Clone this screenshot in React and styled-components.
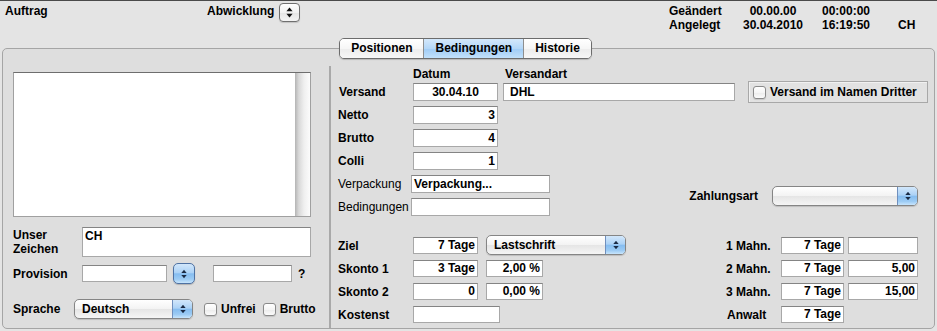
import React from 'react';
import styled, { createGlobalStyle, css } from 'styled-components';

const Global = createGlobalStyle`
  html, body { margin: 0; padding: 0; background: #e4e4e4; }
  body { font-family: "Liberation Sans", Arial, sans-serif; font-size: 12px; color: #000; }
  * { box-sizing: border-box; }
`;

const place = css`
  ${(p) => (p.$col ? `grid-column: ${p.$col};` : '')}
  ${(p) => (p.$row ? `grid-row: ${p.$row};` : '')}
`;

const Window = styled.div`
  width: 937px;
  height: 331px;
  display: flex;
  flex-direction: column;
  border-top: 1px solid #4a4a4a;
  background: #e4e4e4;
  overflow: hidden;
`;

const Header = styled.header`
  height: 37px;
  flex-shrink: 0;
  display: flex;
  align-items: flex-start;
  padding-left: 5px;
  font-weight: bold;
`;

const HeaderTitle = styled.div`
  width: 202px;
  margin-top: 3px;
  line-height: 14px;
`;

const HeaderGroup = styled.div`
  display: flex;
  align-items: flex-start;
  gap: 5px;
  margin-top: 2px;
`;

const HeaderLabel = styled.span`
  margin-top: 1px;
  line-height: 14px;
`;

const GrayStepper = styled.div`
  width: 21px;
  height: 19px;
  border: 1px solid #6f6f6f;
  border-radius: 4px;
  background: linear-gradient(#ffffff, #f1f1f1 50%, #e4e4e4 51%, #f4f4f4);
  box-shadow: 0 1px 1px rgba(0, 0, 0, 0.15);
  display: flex;
  align-items: center;
  justify-content: center;
`;

const InfoGrid = styled.div`
  margin-left: auto;
  margin-top: 3px;
  display: grid;
  grid-template-columns: 66px 76px 70px 56px;
  line-height: 14px;
`;

const InfoCell = styled.div`
  text-align: ${(p) => (p.$center ? 'center' : 'left')};
  padding-left: ${(p) => p.$pl || 0}px;
`;

const TabStrip = styled.div`
  position: relative;
  z-index: 1;
  height: 21px;
  flex-shrink: 0;
  display: flex;
  justify-content: center;
  padding-right: 6px;
  margin-bottom: -11px;
`;

const Segmented = styled.div`
  display: flex;
  height: 21px;
  border: 1px solid #6c6c6c;
  border-radius: 5px;
  overflow: hidden;
  box-shadow: 0 1px 1px rgba(0, 0, 0, 0.18);
`;

const Segment = styled.div`
  padding: 0 11px;
  line-height: 19px;
  font-weight: bold;
  background: ${(p) =>
    p.$active
      ? 'linear-gradient(#d4e8fb, #b4d7f8 50%, #9fcbf5 51%, #c2e1fb)'
      : 'linear-gradient(#ffffff, #f6f6f6 50%, #ececec 51%, #f7f7f7)'};
  & + & {
    border-left: 1px solid #8e8e8e;
  }
`;

const Panel = styled.main`
  flex: 1;
  min-height: 0;
  margin: 0 2px 2px;
  display: flex;
  border: 1px solid #a5a5a5;
  border-radius: 5px;
  background: #dedede;
`;

const LeftColumn = styled.section`
  width: 326px;
  flex-shrink: 0;
  padding: 23px 0 0 10px;
  display: flex;
  flex-direction: column;
`;

const ListBox = styled.div`
  width: 298px;
  height: 145px;
  display: flex;
  background: #fff;
  border: 1px solid #a0a0a0;
  border-top-color: #6e6e6e;
`;

const ListBody = styled.div`
  flex: 1;
`;

const ScrollTrack = styled.div`
  width: 15px;
  background: linear-gradient(to right, #b4b4b4, #d8d8d8 25%, #efefef 60%, #fcfcfc);
`;

const FormRow = styled.div`
  display: flex;
  align-items: ${(p) => p.$align || 'center'};
  margin-top: ${(p) => p.$mt || 0}px;
`;

const SideLabel = styled.div`
  width: ${(p) => p.$w}px;
  flex-shrink: 0;
  font-weight: bold;
  line-height: 14px;
  padding-top: ${(p) => p.$pt || 0}px;
`;

const TextField = styled.div`
  ${place}
  width: ${(p) => p.$w}px;
  height: ${(p) => p.$h || 18}px;
  margin-left: ${(p) => p.$ml || 0}px;
  align-self: start;
  justify-self: start;
  flex-shrink: 0;
  background: #fff;
  border: 1px solid #a8a8a8;
  border-top-color: #848484;
  font-weight: bold;
  line-height: ${(p) => (p.$h || 18) - 2}px;
  text-align: ${(p) => p.$align || 'left'};
  padding: 0 ${(p) => (p.$pad === undefined ? 2 : p.$pad)}px;
  white-space: nowrap;
  overflow: hidden;
`;

const MultiField = styled.div`
  width: ${(p) => p.$w}px;
  height: ${(p) => p.$h}px;
  background: #fff;
  border: 1px solid #a8a8a8;
  border-top-color: #848484;
  font-weight: bold;
  line-height: 14px;
  padding: 1px 2px;
`;

const aqua = 'linear-gradient(#d2e7fb 0%, #acd2f6 45%, #86bdf0 52%, #9ccbf4 80%, #c8e5fc 100%)';

const StepperButton = styled.div`
  width: 22px;
  height: 21px;
  margin: -2px 0 -2px ${(p) => p.$ml || 0}px;
  flex-shrink: 0;
  border: 1px solid #4f72a3;
  border-radius: 5px;
  background: ${aqua};
  box-shadow: 0 1px 1px rgba(0, 0, 0, 0.2);
  display: flex;
  align-items: center;
  justify-content: center;
`;

const Question = styled.span`
  margin-left: ${(p) => p.$ml || 0}px;
  font-weight: bold;
`;

const PopupButton = styled.div`
  ${place}
  width: ${(p) => p.$w}px;
  height: 20px;
  margin-top: ${(p) => p.$mt || 0}px;
  align-self: start;
  flex-shrink: 0;
  display: flex;
  border: 1px solid #858585;
  border-radius: 5px;
  overflow: hidden;
  background: linear-gradient(#ffffff, #f3f3f3 50%, #e5e5e5 51%, #f5f5f5);
  box-shadow: 0 1px 1px rgba(0, 0, 0, 0.15);
`;

const PopupText = styled.div`
  flex: 1;
  padding-left: 7px;
  line-height: 18px;
  font-weight: bold;
  white-space: nowrap;
`;

const PopupCap = styled.div`
  width: 20px;
  border-left: 1px solid #6f8fbd;
  background: ${aqua};
  display: flex;
  align-items: center;
  justify-content: center;
`;

const CheckBox = styled.div`
  width: 13px;
  height: 13px;
  flex-shrink: 0;
  margin-left: ${(p) => p.$ml || 0}px;
  border: 1px solid #8a8a8a;
  border-radius: 3px;
  background: linear-gradient(#ffffff, #f5f5f5 50%, #ebebeb 51%, #fbfbfb);
  box-shadow: 0 1px 1px rgba(0, 0, 0, 0.12);
`;

const CheckText = styled.span`
  margin-left: 4px;
  font-weight: bold;
  white-space: nowrap;
`;

const RightPart = styled.section`
  flex: 1;
  margin-top: 17px;
  border-left: 2px solid #a9a9a9;
  padding-left: 7px;
  display: flex;
  flex-direction: column;
`;

const TopGrid = styled.div`
  display: grid;
  grid-template-columns: 73px 92px 232px 13px 180px;
  grid-template-rows: 17px repeat(6, 23px);
`;

const BottomGrid = styled.div`
  margin-top: 16px;
  display: grid;
  grid-template-columns: 75px 73px 140px 100px 55px 67px 70px;
  grid-template-rows: repeat(3, 23px) 18px;
`;

const ColHead = styled.div`
  ${place}
  margin-top: 1px;
  padding-left: 2px;
  line-height: 14px;
  font-weight: bold;
`;

const GridLabel = styled.div`
  ${place}
  height: ${(p) => p.$h || 18}px;
  display: flex;
  align-items: center;
  padding-left: ${(p) => p.$pl || 0}px;
  font-weight: ${(p) => (p.$plain ? 'normal' : 'bold')};
  white-space: nowrap;
`;

const GroupBox = styled.div`
  ${place}
  height: 22px;
  margin-top: -2px;
  display: flex;
  align-items: center;
  padding-left: 4px;
  border: 1px solid #a8a8a8;
  background: rgba(255, 255, 255, 0.12);
  box-shadow: inset 1px 1px 0 rgba(255, 255, 255, 0.5);
`;

const PayRow = styled.div`
  ${place}
  justify-self: end;
  align-self: start;
  margin: 11px 10px 0 0;
  display: flex;
  align-items: center;
  gap: 14px;
  font-weight: bold;
`;

const Arrows = ({ w = 7, h = 11, color = '#111' }) => (
  <svg width={w} height={h} viewBox="0 0 7 11" aria-hidden="true">
    <path d="M3.5 0.6 L6.6 4.2 L0.4 4.2 Z" fill={color} />
    <path d="M0.4 6.8 L6.6 6.8 L3.5 10.4 Z" fill={color} />
  </svg>
);

const Popup = ({ w, text, col, row, mt }) => (
  <PopupButton $w={w} $col={col} $row={row} $mt={mt}>
    <PopupText>{text}</PopupText>
    <PopupCap>
      <Arrows w={6} h={10} color="#1a2a44" />
    </PopupCap>
  </PopupButton>
);

const topNumbers = [
  { label: 'Netto', value: '3', row: 3 },
  { label: 'Brutto', value: '4', row: 4 },
  { label: 'Colli', value: '1', row: 5 },
];

export default function App() {
  return (
    <>
      <Global />
      <Window>
        <Header>
          <HeaderTitle>Auftrag</HeaderTitle>
          <HeaderGroup>
            <HeaderLabel>Abwicklung</HeaderLabel>
            <GrayStepper>
              <Arrows w={7} h={11} />
            </GrayStepper>
          </HeaderGroup>
          <InfoGrid>
            <InfoCell>Geändert</InfoCell>
            <InfoCell $center>00.00.00</InfoCell>
            <InfoCell $center>00:00:00</InfoCell>
            <InfoCell />
            <InfoCell>Angelegt</InfoCell>
            <InfoCell $center>30.04.2010</InfoCell>
            <InfoCell $center>16:19:50</InfoCell>
            <InfoCell $pl={17}>CH</InfoCell>
          </InfoGrid>
        </Header>

        <TabStrip>
          <Segmented>
            <Segment>Positionen</Segment>
            <Segment $active>Bedingungen</Segment>
            <Segment>Historie</Segment>
          </Segmented>
        </TabStrip>

        <Panel>
          <LeftColumn>
            <ListBox>
              <ListBody />
              <ScrollTrack />
            </ListBox>
            <FormRow $align="flex-start" $mt={10}>
              <SideLabel $w={69} $pt={1}>
                Unser
                <br />
                Zeichen
              </SideLabel>
              <MultiField $w={229} $h={30}>CH</MultiField>
            </FormRow>
            <FormRow $mt={8}>
              <SideLabel $w={69}>Provision</SideLabel>
              <TextField $w={85} $h={17} />
              <StepperButton $ml={6}>
                <Arrows w={6} h={10} color="#1a2a44" />
              </StepperButton>
              <TextField $w={79} $h={17} $ml={18} />
              <Question $ml={6}>?</Question>
            </FormRow>
            <FormRow $mt={17}>
              <SideLabel $w={61}>Sprache</SideLabel>
              <Popup w={119} text="Deutsch" />
              <CheckBox $ml={11} />
              <CheckText>Unfrei</CheckText>
              <CheckBox $ml={7} />
              <CheckText>Brutto</CheckText>
            </FormRow>
          </LeftColumn>

          <RightPart>
            <TopGrid>
              <ColHead $col="2" $row="1">Datum</ColHead>
              <ColHead $col="3" $row="1">Versandart</ColHead>

              <GridLabel $col="1" $row="2" $pl={1}>Versand</GridLabel>
              <TextField $col="2" $row="2" $w={85} $ml={2} $align="center">30.04.10</TextField>
              <TextField $col="3" $row="2" $w={232} $pad={6}>DHL</TextField>
              <GroupBox $col="5" $row="2">
                <CheckBox />
                <CheckText>Versand im Namen Dritter</CheckText>
              </GroupBox>

              {topNumbers.map((r) => (
                <React.Fragment key={r.label}>
                  <GridLabel $col="1" $row={String(r.row)}>{r.label}</GridLabel>
                  <TextField $col="2" $row={String(r.row)} $w={85} $ml={2} $align="right">
                    {r.value}
                  </TextField>
                </React.Fragment>
              ))}

              <GridLabel $col="1" $row="6" $plain>Verpackung</GridLabel>
              <TextField $col="2 / 4" $row="6" $w={139}>Verpackung...</TextField>
              <GridLabel $col="1" $row="7" $plain>Bedingungen</GridLabel>
              <TextField $col="2 / 4" $row="7" $w={139} />

              <PayRow $col="3 / 6" $row="6 / 8">
                <span>Zahlungsart</span>
                <Popup w={146} text="" />
              </PayRow>
            </TopGrid>

            <BottomGrid>
              <GridLabel $col="1" $row="1" $h={17}>Ziel</GridLabel>
              <TextField $col="2" $row="1" $w={65} $h={17} $align="right">7 Tage</TextField>
              <Popup col="3" row="1" w={140} mt={-2} text="Lastschrift" />
              <GridLabel $col="5" $row="1" $h={17}>1 Mahn.</GridLabel>
              <TextField $col="6" $row="1" $w={63} $h={17} $align="right">7 Tage</TextField>
              <TextField $col="7" $row="1" $w={70} $h={17} $align="right" />

              <GridLabel $col="1" $row="2" $h={17}>Skonto 1</GridLabel>
              <TextField $col="2" $row="2" $w={65} $h={17} $align="right">3 Tage</TextField>
              <TextField $col="3" $row="2" $w={57} $h={17} $align="right">2,00 %</TextField>
              <GridLabel $col="5" $row="2" $h={17}>2 Mahn.</GridLabel>
              <TextField $col="6" $row="2" $w={63} $h={17} $align="right">7 Tage</TextField>
              <TextField $col="7" $row="2" $w={70} $h={17} $align="right">5,00</TextField>

              <GridLabel $col="1" $row="3" $h={17}>Skonto 2</GridLabel>
              <TextField $col="2" $row="3" $w={65} $h={17} $align="right">0</TextField>
              <TextField $col="3" $row="3" $w={57} $h={17} $align="right">0,00 %</TextField>
              <GridLabel $col="5" $row="3" $h={17}>3 Mahn.</GridLabel>
              <TextField $col="6" $row="3" $w={63} $h={17} $align="right">7 Tage</TextField>
              <TextField $col="7" $row="3" $w={70} $h={17} $align="right">15,00</TextField>

              <GridLabel $col="1" $row="4" $h={17}>Kostenst</GridLabel>
              <TextField $col="2 / 4" $row="4" $w={87} $h={17} />
              <GridLabel $col="5" $row="4" $h={17} $pl={1}>Anwalt</GridLabel>
              <TextField $col="6" $row="4" $w={63} $h={17} $align="right">7 Tage</TextField>
            </BottomGrid>
          </RightPart>
        </Panel>
      </Window>
    </>
  );
}
